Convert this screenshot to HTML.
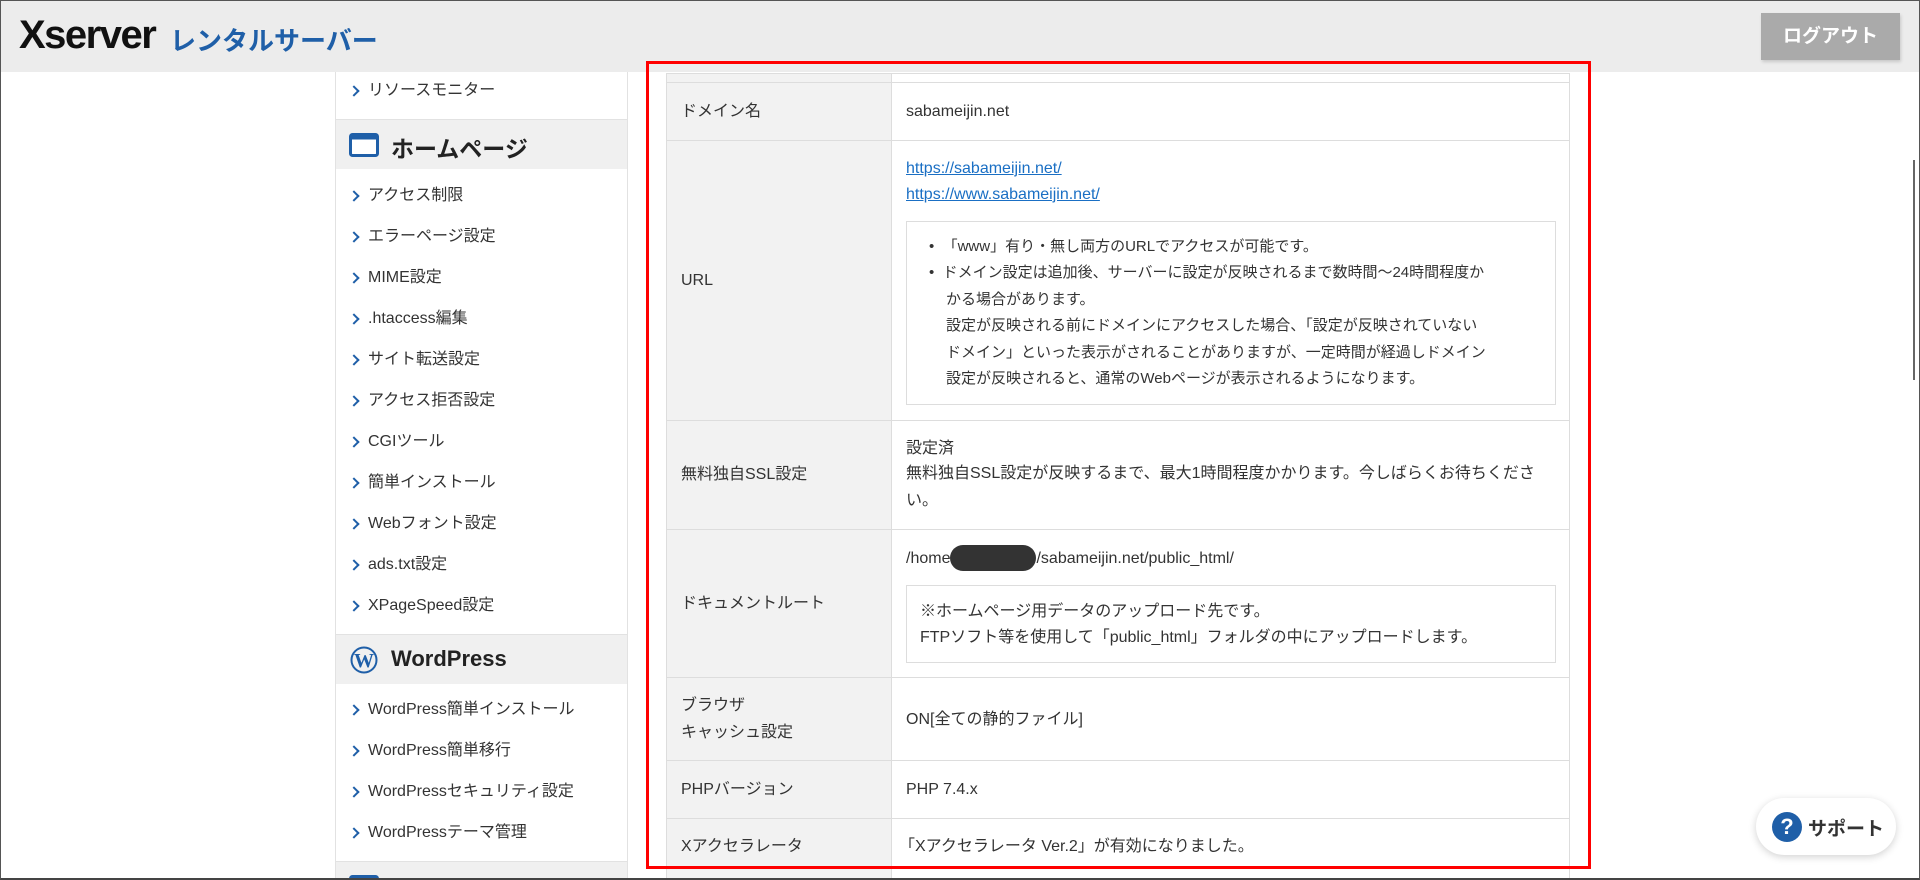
<!DOCTYPE html>
<html style="width:1920px;height:880px;overflow:hidden"><head><meta charset="utf-8"><style>
*{margin:0;padding:0;box-sizing:border-box}
body{width:1920px;height:880px;overflow:hidden;background:#fff;font-family:"Liberation Sans","Noto Sans CJK JP",sans-serif;color:#333;font-size:16px;position:relative}
.abs{position:absolute}
#frame{position:absolute;left:0;top:0;width:1920px;height:880px;border:1px solid #555;border-bottom:2px solid #444;pointer-events:none;z-index:10}
#hdr{left:0;top:0;width:1920px;height:72px;background:#ececec}
.logo1{left:19px;top:13px;font-size:40px;font-weight:bold;color:#111;letter-spacing:-1.5px}
.logo2{left:170px;top:21px;font-size:26px;font-weight:bold;color:#1f5fa8}
.logout{left:1761px;top:13px;width:139px;height:47px;background:#aaa;color:#fff;font-weight:bold;font-size:19px;text-align:center;line-height:47px;box-shadow:1px 2px 3px rgba(0,0,0,.15)}
#side{left:335px;top:72px;width:293px;height:808px;border-left:1px solid #e2e2e2;border-right:1px solid #e2e2e2;overflow:hidden}
.it{position:absolute;left:0;font-size:16px;color:#333;line-height:20px}
.it:before{content:"";position:absolute;left:14px;top:6px;width:6px;height:6px;border-top:2.5px solid #1f5fa8;border-right:2.5px solid #1f5fa8;transform:rotate(45deg)}
.it span{position:absolute;left:32px;white-space:nowrap}
.sec{position:absolute;left:0;width:291px;height:50px;background:#f0f0f0;font-size:23px;font-weight:bold;color:#222}
.row{position:absolute;left:666px;width:904px;border-top:1px solid #ddd;border-left:1px solid #ddd;border-right:1px solid #ddd}
.lab{position:absolute;left:0;top:0;bottom:0;width:225px;background:#f2f2f2;border-right:1px solid #ddd}
.t{position:absolute;white-space:nowrap;font-size:16px;line-height:20px}
a{color:#1a6fc4;text-decoration:underline}
.box{position:absolute;border:1px solid #ddd;background:#fff}
</style></head><body>
<div id="hdr" class="abs"></div>
<div class="abs logo1">Xserver</div>
<div class="abs logo2">レンタルサーバー</div>
<div class="abs logout">ログアウト</div>

<div id="side" class="abs">
<div class="it" style="top:9px"><span>リソースモニター</span></div>
<div class="sec" style="top:47px;border-top:1px solid #e2e2e2">
<svg class="abs" style="left:13px;top:13px" width="30" height="24" viewBox="0 0 30 24"><rect x="1.5" y="1.5" width="27" height="21" rx="2" fill="#fff" stroke="#1f5fa8" stroke-width="3"/><rect x="1.5" y="1.5" width="27" height="5" fill="#1f5fa8"/></svg>
<span class="abs" style="left:55px;top:10px">ホームページ</span></div>
<div class="it" style="top:114px"><span>アクセス制限</span></div>
<div class="it" style="top:155px"><span>エラーページ設定</span></div>
<div class="it" style="top:196px"><span>MIME設定</span></div>
<div class="it" style="top:237px"><span>.htaccess編集</span></div>
<div class="it" style="top:278px"><span>サイト転送設定</span></div>
<div class="it" style="top:319px"><span>アクセス拒否設定</span></div>
<div class="it" style="top:360px"><span>CGIツール</span></div>
<div class="it" style="top:401px"><span>簡単インストール</span></div>
<div class="it" style="top:442px"><span>Webフォント設定</span></div>
<div class="it" style="top:483px"><span>ads.txt設定</span></div>
<div class="it" style="top:524px"><span>XPageSpeed設定</span></div>
<div class="sec" style="top:562px;border-top:1px solid #e2e2e2">
<svg class="abs" style="left:14px;top:11px" width="28" height="28" viewBox="0 0 28 28"><circle cx="14" cy="14" r="12.5" fill="none" stroke="#1f5fa8" stroke-width="2"/><text x="14" y="21" text-anchor="middle" font-family="Liberation Serif" font-weight="bold" font-size="20" fill="#1f5fa8">W</text></svg>
<span class="abs" style="left:55px;top:11px;font-size:22px">WordPress</span></div>
<div class="it" style="top:628px"><span>WordPress簡単インストール</span></div>
<div class="it" style="top:669px"><span>WordPress簡単移行</span></div>
<div class="it" style="top:710px"><span>WordPressセキュリティ設定</span></div>
<div class="it" style="top:751px"><span>WordPressテーマ管理</span></div>
<div class="sec" style="top:789px;border-top:1px solid #e2e2e2">
<svg class="abs" style="left:13px;top:13px" width="30" height="24" viewBox="0 0 30 24"><rect x="1.5" y="1.5" width="27" height="21" rx="2" fill="#fff" stroke="#1f5fa8" stroke-width="3"/></svg></div>
</div>

<div class="row" style="top:73px;height:9px"><div class="lab"></div></div>
<div class="row" style="top:82px;height:58px"><div class="lab"></div>
<div class="t" style="left:14px;top:19px">ドメイン名</div><div class="t" style="left:239px;top:19px">sabameijin.net</div></div>
<div class="row" style="top:140px;height:280px"><div class="lab"></div>
<div class="t" style="left:14px;top:130px">URL</div>
<div class="t" style="left:239px;top:18px"><a>https://sabameijin.net/</a></div>
<div class="t" style="left:239px;top:44px"><a>https://www.sabameijin.net/</a></div>
<div class="box" style="left:239px;top:80px;width:650px;height:184px">
<div class="t" style="left:22px;top:15px;font-size:15px">•&nbsp;&nbsp;「www」有り・無し両方のURLでアクセスが可能です。</div>
<div class="t" style="left:22px;top:41px;font-size:15px">•&nbsp;&nbsp;ドメイン設定は追加後、サーバーに設定が反映されるまで数時間～24時間程度か</div>
<div class="t" style="left:39px;top:68px;font-size:15px">かる場合があります。</div>
<div class="t" style="left:39px;top:94px;font-size:15px">設定が反映される前にドメインにアクセスした場合、「設定が反映されていない</div>
<div class="t" style="left:39px;top:121px;font-size:15px">ドメイン」といった表示がされることがありますが、一定時間が経過しドメイン</div>
<div class="t" style="left:39px;top:147px;font-size:15px">設定が反映されると、通常のWebページが表示されるようになります。</div>
</div></div>
<div class="row" style="top:420px;height:109px"><div class="lab"></div>
<div class="t" style="left:14px;top:44px">無料独自SSL設定</div>
<div class="t" style="left:239px;top:18px">設定済</div>
<div class="t" style="left:239px;top:43px">無料独自SSL設定が反映するまで、最大1時間程度かかります。今しばらくお待ちくださ</div>
<div class="t" style="left:239px;top:70px">い。</div></div>
<div class="row" style="top:529px;height:148px"><div class="lab"></div>
<div class="t" style="left:14px;top:64px">ドキュメントルート</div>
<div class="t" style="left:239px;top:19px">/home<span style="display:inline-block;width:86px;height:26px;background:#333;border-radius:13px;vertical-align:middle;margin:-6px 0 -4px"></span>/sabameijin.net/public_html/</div>
<div class="box" style="left:239px;top:55px;width:650px;height:78px">
<div class="t" style="left:13px;top:16px">※ホームページ用データのアップロード先です。</div>
<div class="t" style="left:13px;top:42px">FTPソフト等を使用して「public_html」フォルダの中にアップロードします。</div></div></div>
<div class="row" style="top:677px;height:83px"><div class="lab"></div>
<div class="t" style="left:14px;top:18px">ブラウザ</div><div class="t" style="left:14px;top:45px">キャッシュ設定</div>
<div class="t" style="left:239px;top:32px">ON[全ての静的ファイル]</div></div>
<div class="row" style="top:760px;height:58px"><div class="lab"></div>
<div class="t" style="left:14px;top:19px">PHPバージョン</div><div class="t" style="left:239px;top:19px">PHP 7.4.x</div></div>
<div class="row" style="top:818px;height:62px"><div class="lab"></div>
<div class="t" style="left:14px;top:18px">Xアクセラレータ</div><div class="t" style="left:232px;top:18px">「Xアクセラレータ Ver.2」が有効になりました。</div></div>

<div class="abs" style="left:646px;top:61px;width:945px;height:808px;border:3px solid #f00;z-index:5"></div>

<div class="abs" style="left:1756px;top:798px;width:140px;height:57px;border-radius:29px;background:#fff;box-shadow:0 2px 8px rgba(0,0,0,.18)">
<div class="abs" style="left:16px;top:14px;width:30px;height:30px;border-radius:50%;background:#1f5fa8;color:#fff;font-weight:bold;font-size:22px;text-align:center;line-height:30px">?</div>
<div class="abs" style="left:52px;top:16px;font-size:19px;font-weight:bold;color:#333">サポート</div></div>

<div class="abs" style="left:1913px;top:160px;width:2px;height:220px;background:#666"></div>
<div id="frame"></div>
</body></html>
